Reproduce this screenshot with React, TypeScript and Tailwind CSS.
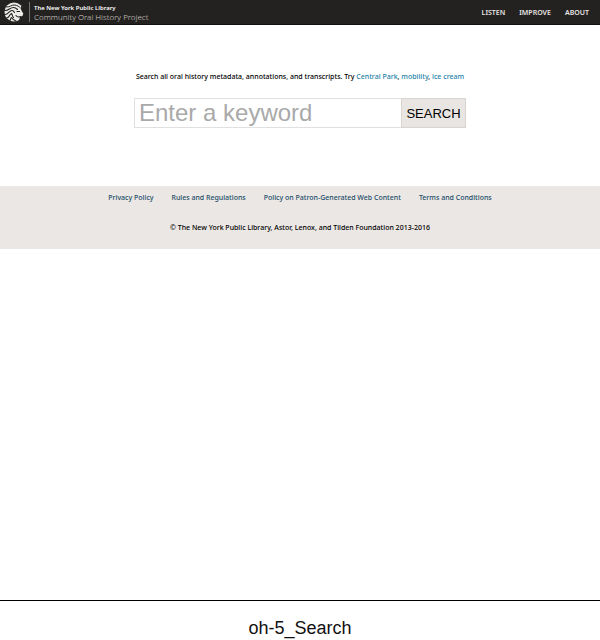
import React from "react";

const suggestions = ["Central Park", "mobility", "ice cream"];
const navItems = ["LISTEN", "IMPROVE", "ABOUT"];
const footerLinks = [
  "Privacy Policy",
  "Rules and Regulations",
  "Policy on Patron-Generated Web Content",
  "Terms and Conditions",
];

function LionLogo() {
  return (
    <svg viewBox="0 0 40 40" className="size-5 shrink-0" aria-hidden="true">
      <circle cx="20" cy="20" r="19" fill="#eeece9" />
      <g fill="none" stroke="#242220" strokeLinecap="round" strokeLinejoin="round">
        <path d="M5 10 C12 11 15 5 22 6 C27 7 30 9 33 12" strokeWidth="2" />
        <path d="M2 17 C9 18 12 11 19 11 C23 11 25 13 27 15" strokeWidth="2.2" />
        <path d="M2 25 C9 25 10 17 16 17 C19 17 20 19 21 21" strokeWidth="2.2" />
        <path d="M6 32 C12 30 11 24 15 23 C17 25 16 29 19 31" strokeWidth="2.2" />
        <path d="M12 37 C14 35 13 32 15 31 C17 34 20 37 24 38" strokeWidth="2.2" />
        <path d="M26 19 L31 19" strokeWidth="2.2" />
        <path d="M24 27 C26 30 29 31 33 29" strokeWidth="2.2" />
      </g>
      <path d="M34 7 C38 11 41 17 40 23 L37 21 L34 15 Z M32 30 L40 26 L36 34 L30 38 Z" fill="#242220" />
    </svg>
  );
}

export default function App() {
  return (
    <div className="flex min-h-screen flex-col bg-white font-['Noto_Sans',sans-serif] text-[7px] leading-3 text-black">
      <header className="flex h-[25px] items-center justify-between border-b border-[#11100f] bg-[#242220] pr-[11px] pl-1">
        <a href="#home" className="flex items-center gap-[5px]">
          <LionLogo />
          <span className="flex h-5 flex-col justify-end border-l border-[#77736f] pl-1">
            <span className="text-[6px] leading-2 font-semibold whitespace-nowrap text-white">
              The New York Public Library
            </span>
            <span className="text-[8px] leading-[10px] font-light whitespace-nowrap text-[#d0cdca]">
              Community Oral History Project
            </span>
          </span>
        </a>
        <nav className="flex gap-[14px] pt-px font-semibold text-[#e8e5e2]">
          {navItems.map((item) => (
            <a key={item} href={`#${item.toLowerCase()}`}>
              {item}
            </a>
          ))}
        </nav>
      </header>

      <main className="flex flex-col items-center pt-[46px] pb-[58px]">
        <p className="font-medium whitespace-nowrap">
          Search all oral history metadata, annotations, and transcripts. Try{" "}
          {suggestions.map((term, i) => (
            <React.Fragment key={term}>
              {i > 0 && ", "}
              <a href={`#${term}`} className="text-[#1b7fa7]">
                {term}
              </a>
            </React.Fragment>
          ))}
        </p>
        <form
          className="mt-[15px] flex h-[30px] w-[332px] font-['Liberation_Sans',sans-serif]"
          onSubmit={(e) => e.preventDefault()}
        >
          <input
            type="text"
            aria-label="Keyword"
            placeholder="Enter a keyword"
            className="min-w-0 flex-1 border border-r-0 border-[#e0e0e0] bg-white px-1 text-2xl placeholder:text-[#a9a9a9]"
          />
          <button
            type="submit"
            className="w-[65px] border border-[#d8d4d1] bg-[#e9e5e2] pt-[2px] text-[13px]"
          >
            SEARCH
          </button>
        </form>
      </main>

      <footer className="flex h-[63px] flex-col items-center bg-[#ebe7e4] pt-[6px] font-medium">
        <nav className="flex gap-[18px] whitespace-nowrap text-[#1b4d68]">
          {footerLinks.map((label) => (
            <a key={label} href="#footer">
              {label}
            </a>
          ))}
        </nav>
        <p className="mt-[18px]">
          © The New York Public Library, Astor, Lenox, and Tilden Foundation 2013-2016
        </p>
      </footer>

      <div className="mt-auto flex h-10 items-center justify-center border-t border-black pt-[14px] font-['Liberation_Sans',sans-serif] text-lg text-[#111]">
        oh-5_Search
      </div>
    </div>
  );
}
